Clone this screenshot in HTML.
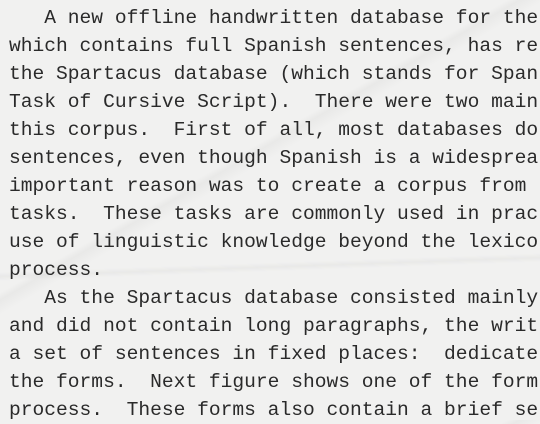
<!DOCTYPE html>
<html><head><style>
html,body{margin:0;padding:0;}
body{width:540px;height:420px;overflow:hidden;background:#f1f1f0;
background-image:linear-gradient(150deg,rgba(0,0,0,0) 40%,rgba(0,0,0,0.03) 41%,rgba(0,0,0,0) 43%),linear-gradient(178deg,rgba(0,0,0,0) 62%,rgba(0,0,0,0.03) 63%,rgba(0,0,0,0) 64%);}
pre{margin:0;padding:4px 0 0 9px;font-family:"Liberation Mono",monospace;font-size:19.6px;line-height:28px;color:#2a2a2a;white-space:pre;}
</style></head><body><pre>   A new offline handwritten database for the
which contains full Spanish sentences, has re
the Spartacus database (which stands for Span
Task of Cursive Script).  There were two main
this corpus.  First of all, most databases do
sentences, even though Spanish is a widesprea
important reason was to create a corpus from
tasks.  These tasks are commonly used in prac
use of linguistic knowledge beyond the lexico
process.
   As the Spartacus database consisted mainly
and did not contain long paragraphs, the writ
a set of sentences in fixed places:  dedicate
the forms.  Next figure shows one of the form
process.  These forms also contain a brief se</pre></body></html>
